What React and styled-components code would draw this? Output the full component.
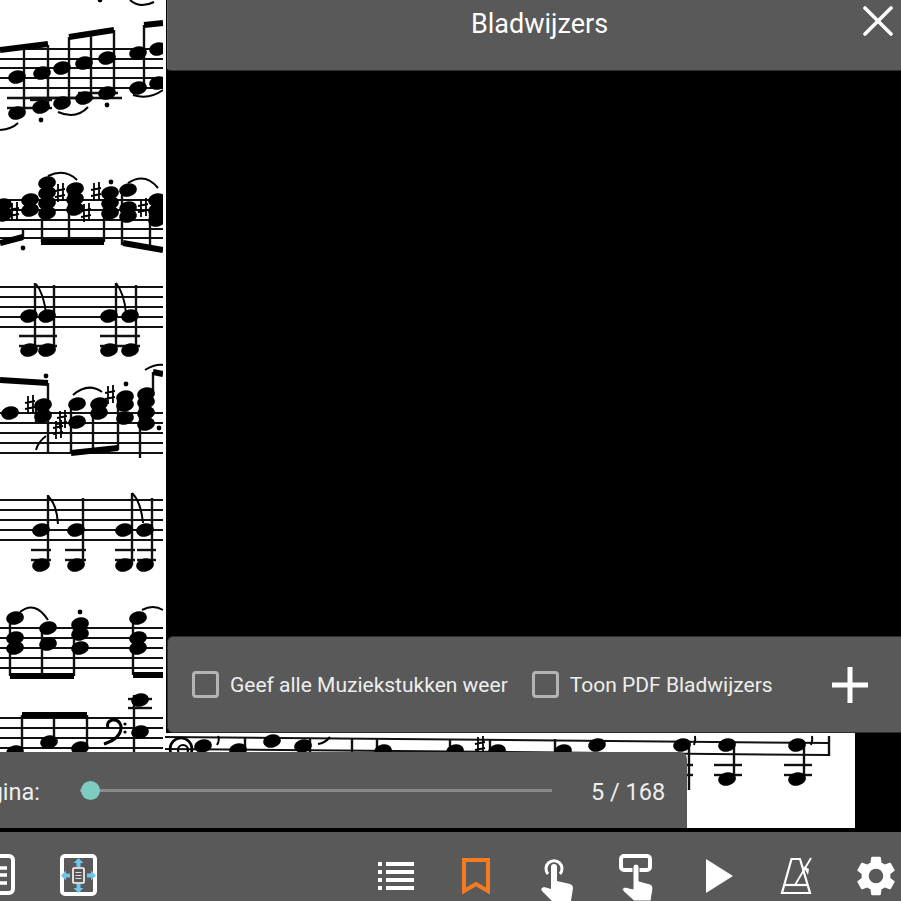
import React from 'react';
import styled, { createGlobalStyle } from 'styled-components';
import { MdSettings } from 'react-icons/md';

const GlobalStyle = createGlobalStyle`
  html, body {
    margin: 0;
    padding: 0;
    background: #000;
    font-family: Roboto, "Liberation Sans", sans-serif;
  }
`;

const Screen = styled.div`
  position: relative;
  width: 901px;
  height: 901px;
  overflow: hidden;
  background: #000;
  display: flex;
  flex-direction: column;
`;

const ScoreArea = styled.div`
  height: 828px;
  flex: none;
  svg {
    display: block;
  }
`;

const BookmarkPanel = styled.section`
  position: absolute;
  top: 0;
  left: 166px;
  right: 0;
  height: 733px;
  display: flex;
  flex-direction: column;
  background: #000;
`;

const PanelHeader = styled.header`
  height: 70px;
  flex: none;
  display: grid;
  grid-template-columns: 1fr auto 1fr;
  margin-left: 1px;
  padding-left: 10px;
  background: #595959;
  border-bottom: 1px solid #2c2c2c;
  border-left: 1px solid #6a6a6a;
  border-bottom-left-radius: 4px;
  color: #fff;
`;

const Title = styled.h1`
  grid-column: 2;
  margin: 0;
  font-size: 27px;
  font-weight: 400;
  line-height: 48px;
`;

const CloseButton = styled.div`
  justify-self: end;
  width: 30px;
  height: 30px;
  margin: 6px 8px 0 0;
  svg {
    display: block;
  }
`;

const PanelBody = styled.div`
  flex: 1;
  background: #000;
`;

const PanelFooter = styled.footer`
  height: 95px;
  flex: none;
  display: flex;
  align-items: center;
  margin-left: 1px;
  padding-left: 24px;
  background: #595959;
  border: 1px solid #2c2c2c;
  border-right: none;
  border-radius: 6px 0 0 6px;
  color: #eeeeee;
`;

const CheckField = styled.label`
  display: flex;
  align-items: center;
  gap: 11px;
  margin-right: 24px;
  font-size: 21px;
  white-space: nowrap;
`;

const Box = styled.span`
  width: 21px;
  height: 21px;
  border: 3px solid #b4b4b4;
  border-radius: 4px;
`;

const AddButton = styled.div`
  margin-left: auto;
  margin-right: 32px;
  width: 38px;
  height: 38px;
  svg {
    display: block;
  }
`;

const PageBar = styled.div`
  position: absolute;
  top: 752px;
  left: -60px;
  width: 747px;
  height: 76px;
  display: flex;
  align-items: center;
  background: #595959;
  border-top-right-radius: 7px;
  color: #eeeeee;
  font-size: 23.5px;
`;

const PageLabel = styled.span`
  width: 140px;
  flex: none;
  margin-top: 4px;
  text-align: right;
  padding-right: 40px;
  box-sizing: border-box;
`;

const SliderTrack = styled.div`
  position: relative;
  width: 472px;
  height: 3px;
  flex: none;
  background: #8a8a8a;
`;

const SliderThumb = styled.span`
  position: absolute;
  left: 1px;
  top: -8px;
  width: 19px;
  height: 19px;
  border-radius: 50%;
  background: #7ecbc2;
`;

const PageCount = styled.span`
  margin-left: 39px;
  margin-top: 4px;
  white-space: nowrap;
`;

const Toolbar = styled.nav`
  height: 69px;
  flex: none;
  margin-top: 4px;
  display: flex;
  background: #595959;
  overflow: hidden;
`;

const ToolGroup = styled.div`
  display: flex;
  margin-left: ${(p) => p.$start || 0}px;
  margin-right: ${(p) => p.$end || 0}px;
`;

const Spacer = styled.div`
  flex: 1;
`;

const ToolButton = styled.div`
  width: 80px;
  height: 69px;
  flex: none;
  box-sizing: border-box;
  padding-top: ${(p) => p.$drop || 0}px;
  display: flex;
  align-items: center;
  justify-content: center;
  color: ${(p) => p.$color || '#fff'};
  svg {
    display: block;
    flex: none;
  }
`;

const Icon = ({ children }) => (
  <svg width="80" height="69" viewBox="0 0 80 69" fill="none">
    {children}
  </svg>
);

const Arrow = ({ x, y, r }) => (
  <path d="M-5 0 L0 -5 L5 0 H2 V4 H-2 V0 Z" fill="#6ec6ee" transform={`translate(${x} ${y}) rotate(${r})`} />
);

const DocIcon = () => (
  <Icon>
    <rect x="10" y="24" width="45" height="37" rx="4" stroke="#fff" strokeWidth="4" />
    <path d="M40 36h9M40 43h9M40 51h9" stroke="#fff" strokeWidth="3.4" />
  </Icon>
);

const FitIcon = () => (
  <Icon>
    <rect x="24" y="24" width="33" height="38" rx="3" stroke="#fff" strokeWidth="4" />
    <rect x="35" y="36" width="11" height="15" rx="1" stroke="#fff" strokeWidth="1.6" />
    <path d="M37.5 40.5h6M37.5 43.5h6M37.5 46.5h6" stroke="#ddd" strokeWidth="1.2" />
    <Arrow x={40.5} y={31} r={0} />
    <Arrow x={40.5} y={56} r={180} />
    <Arrow x={28} y={43.5} r={-90} />
    <Arrow x={53} y={43.5} r={90} />
  </Icon>
);

const ListIcon = () => (
  <Icon>
    {[32, 40, 48, 56].map((y) => (
      <g key={y} fill="#fff">
        <rect x="22" y={y - 2} width="4" height="4" />
        <rect x="30" y={y - 2} width="28" height="4" />
      </g>
    ))}
  </Icon>
);

const BookmarkIcon = () => (
  <Icon>
    <path d="M28 28h24v31l-12-7-12 7z" stroke="currentColor" strokeWidth="4" />
  </Icon>
);

const TapIcon = () => (
  <Icon>
    <path d="M32 42a8 8 0 1 1 12 0" stroke="#fff" strokeWidth="3" />
    <path d="M35 35a3 3 0 0 1 6 0v14l13 3q3 1 3 4l-2 13H36L26 59q-2-3 2-4l7 2z" fill="#fff" />
  </Icon>
);

const PressIcon = () => (
  <Icon>
    <rect x="25" y="24" width="29" height="14" rx="3" stroke="#fff" strokeWidth="4" />
    <path
      d="M37 35a3 3 0 0 1 6 0v14l11 3q3 1 3 4l-2 13H38L27 59q-2-3 2-4l8 2z"
      fill="#fff"
      stroke="#595959"
      strokeWidth="1"
    />
  </Icon>
);

const PlayIcon = () => (
  <Icon>
    <polygon points="30,27 57,44 30,61" fill="#fff" />
  </Icon>
);

const MetronomeIcon = () => (
  <Icon>
    <path d="M35.5 27h8.5l10 34H26z" stroke="#fff" strokeWidth="2.2" />
    <path d="M28 53h24" stroke="#fff" strokeWidth="2.2" />
    <path d="M39 53L55 26" stroke="#fff" strokeWidth="1.8" />
    <path d="M47 34l6 3-1 6z" fill="#fff" />
  </Icon>
);

// the score itself is a scan in the reference, drawn here from note lists
const staves = [
  [0, 163, [49, 59, 68, 78, 88]],
  [0, 163, [200, 210, 220, 229, 238]],
  [0, 163, [287, 297, 307, 317, 327]],
  [0, 163, [413, 423, 433, 443, 453]],
  [0, 163, [500, 510, 520, 530, 540]],
  [0, 163, [628, 638, 648, 658, 668]],
  [0, 163, [718, 728, 738, 748]],
];

const notes = [
  [17, 77], [42, 73], [62, 68], [84, 63], [107, 58], [138, 53], [158, 49], [138, 88], [158, 83],
  [17, 113], [41, 107], [62, 103], [84, 98], [107, 93],
  [3, 205], [3, 215], [30, 200], [30, 210], [47, 183], [47, 193], [47, 203], [47, 213],
  [75, 189], [75, 199], [75, 209], [110, 193], [110, 203], [110, 213], [128, 190],
  [128, 208], [128, 216], [157, 200], [157, 210], [157, 220],
  [29, 316], [47, 316], [109, 316], [130, 316], [29, 350], [47, 350], [109, 350], [130, 350],
  [10, 413], [43, 405], [43, 416], [77, 404], [77, 422], [99, 404], [99, 413],
  [125, 397], [125, 405], [125, 418], [146, 394], [146, 402], [146, 413], [146, 424],
  [41, 530], [76, 530], [124, 530], [145, 530], [41, 565], [76, 565], [124, 565], [145, 565],
  [15, 618], [15, 638], [15, 648], [48, 628], [48, 644], [80, 624], [80, 634], [80, 648],
  [138, 618], [138, 638], [138, 648],
  [49, 742], [80, 748], [15, 752], [140, 700], [140, 732],
  [203, 746], [238, 750], [272, 741], [303, 746], [383, 751], [455, 751], [497, 751], [563, 751],
  [597, 745], [682, 745], [727, 745], [797, 745], [727, 779], [797, 779],
];

const stems = [
  [24, 50, 110], [48, 45, 107], [69, 37, 100], [91, 33, 95], [114, 30, 90], [144, 25, 85],
  [23, 230, 237], [42, 190, 242], [69, 190, 242], [104, 200, 242], [122, 195, 245], [150, 210, 250],
  [35, 283, 350], [54, 285, 350], [116, 283, 350], [136, 285, 350],
  [36, 405, 422], [48, 383, 452], [71, 405, 453], [93, 405, 450], [118, 400, 450], [140, 395, 458], [153, 372, 395],
  [48, 495, 565], [83, 498, 565], [132, 493, 565], [152, 498, 565],
  [10, 620, 676], [42, 630, 676], [74, 625, 676], [133, 620, 675],
  [22, 715, 750], [54, 715, 745], [87, 715, 745], [134, 695, 752],
  [245, 737, 752], [310, 738, 752], [352, 738, 752], [377, 738, 752], [450, 739, 753], [490, 739, 753], [555, 739, 753],
  [689, 742, 790], [734, 745, 780], [804, 745, 780], [829, 736, 756],
];

const beams = [
  [0, 50, 48, 44], [69, 37, 114, 30], [144, 25, 163, 23],
  [0, 243, 23, 237], [41, 242, 104, 242], [123, 243, 163, 250],
  [0, 380, 48, 383], [71, 453, 118, 448], [153, 372, 163, 374],
  [10, 676, 74, 676], [133, 675, 163, 675],
  [22, 715, 87, 715],
];

const ledgers = [
  [7, 52, 98], [7, 52, 108], [30, 52, 100], [30, 122, 98], [52, 94, 98], [78, 118, 93],
  [19, 57, 336], [19, 57, 346], [100, 140, 336], [100, 140, 346],
  [31, 51, 550], [31, 51, 560], [65, 86, 550], [65, 86, 560], [115, 135, 550], [115, 135, 560], [137, 156, 550], [137, 156, 560],
  [128, 152, 699], [128, 152, 708],
  [714, 742, 765], [714, 742, 775], [784, 812, 765], [784, 812, 775], [680, 693, 765], [680, 693, 775],
];

const curves = [
  'M0 130q12-1 18-7', 'M58 112q18 8 30-5', 'M133 95q16 5 30-5', 'M130 0q10 9 24 2', 'M48 176q17-8 29 4',
  'M128 183q17-11 30 5', 'M36 284q8 10 10 30', 'M116 283q8 10 10 30', 'M73 395q15-13 29-3', 'M145 370q10-6 18-5',
  'M48 496q9 9 10 28', 'M132 493q9 9 11 30', 'M20 612q15-12 28 8', 'M142 610q11-6 21 0',
  'M36 450q2-8 10-14', 'M218 736q2 4-1 9', 'M318 744q7-1 12-7', 'M695 736q1 4-1 9', 'M812 736q1 4-1 9',
];

const dots = [[41, 120], [107, 105], [100, 0], [23, 248], [111, 182], [46, 376], [126, 384], [159, 428], [80, 612]];

const sharps = [[60, 193], [86, 213], [96, 192], [143, 208], [14, 212], [30, 405], [62, 420], [110, 395], [58, 430], [480, 746]];

const ScoreDrawing = () => (
  <svg width="855" height="828" viewBox="0 0 855 828">
    <rect width="855" height="828" fill="#fff" />
    <g stroke="#111" strokeWidth="2">
      {staves.map(([x1, x2, ys]) => ys.map((y) => <line key={y} x1={x1} x2={x2} y1={y} y2={y} />))}
      <line x1="165" y1="737" x2="829" y2="743" />
      <line x1="165" y1="749" x2="829" y2="755" />
      {ledgers.map(([x1, x2, y]) => (
        <line key={`${x1}-${y}`} x1={x1} x2={x2} y1={y} y2={y} strokeWidth="2.4" />
      ))}
      {stems.map(([x, y1, y2]) => (
        <line key={`${x}-${y1}`} x1={x} x2={x} y1={y1} y2={y2} strokeWidth="2.4" />
      ))}
    </g>
    <g stroke="#000" strokeWidth="6">
      {beams.map(([x1, y1, x2, y2]) => (
        <line key={`${x1}-${y1}`} x1={x1} y1={y1} x2={x2} y2={y2} />
      ))}
    </g>
    <g fill="#000">
      {notes.map(([x, y]) => (
        <ellipse key={`${x}-${y}`} cx={x} cy={y} rx="9" ry="6.6" transform={`rotate(-12 ${x} ${y})`} />
      ))}
      {dots.map(([x, y]) => (
        <circle key={`${x}-${y}`} cx={x} cy={y} r="2.4" />
      ))}
    </g>
    <g stroke="#000" strokeWidth="2" fill="none">
      {curves.map((d) => (
        <path key={d} d={d} />
      ))}
      {sharps.map(([x, y]) => (
        <path key={`${x}-${y}`} d={`M${x - 2} ${y - 9}v18M${x + 3} ${y - 10}v18M${x - 5} ${y - 2}l10-2M${x - 5} ${y + 4}l10-2`} strokeWidth="1.8" />
      ))}
      <path d="M104 744q18-6 17-18q-2-7-9-6q-6 2-4 8" strokeWidth="3" />
      <circle cx="181" cy="749" r="11" strokeWidth="2.6" />
      <circle cx="183" cy="750" r="5" strokeWidth="2.2" />
    </g>
    <circle cx="125" cy="724" r="1.6" />
    <circle cx="125" cy="732" r="1.6" />
    <rect x="163" y="0" width="3" height="733" fill="#fff" />
  </svg>
);

const Check = ({ children }) => (
  <CheckField>
    <Box />
    {children}
  </CheckField>
);

export default function App() {
  return (
    <>
      <GlobalStyle />
      <Screen>
        <ScoreArea>
          <ScoreDrawing />
        </ScoreArea>
        <Toolbar>
          <ToolGroup $start={-42}>
            <ToolButton><DocIcon /></ToolButton>
            <ToolButton><FitIcon /></ToolButton>
          </ToolGroup>
          <Spacer />
          <ToolGroup $end={-15}>
            <ToolButton><ListIcon /></ToolButton>
            <ToolButton $color="#f47b20"><BookmarkIcon /></ToolButton>
            <ToolButton><TapIcon /></ToolButton>
            <ToolButton><PressIcon /></ToolButton>
            <ToolButton><PlayIcon /></ToolButton>
            <ToolButton><MetronomeIcon /></ToolButton>
            <ToolButton $drop={19}><MdSettings size={48} /></ToolButton>
          </ToolGroup>
        </Toolbar>

        <BookmarkPanel>
          <PanelHeader>
            <Title>Bladwijzers</Title>
            <CloseButton>
              <svg width="30" height="30" viewBox="0 0 30 30">
                <path d="M2 2L28 28M28 2L2 28" stroke="#fff" strokeWidth="3.6" strokeLinecap="round" />
              </svg>
            </CloseButton>
          </PanelHeader>
          <PanelBody />
          <PanelFooter>
            <Check>Geef alle Muziekstukken weer</Check>
            <Check>Toon PDF Bladwijzers</Check>
            <AddButton>
              <svg width="38" height="38" viewBox="0 0 38 38">
                <path d="M19 1V37M1 19H37" stroke="#fff" strokeWidth="5" />
              </svg>
            </AddButton>
          </PanelFooter>
        </BookmarkPanel>

        <PageBar>
          <PageLabel>Pagina:</PageLabel>
          <SliderTrack>
            <SliderThumb />
          </SliderTrack>
          <PageCount>5 / 168</PageCount>
        </PageBar>
      </Screen>
    </>
  );
}
